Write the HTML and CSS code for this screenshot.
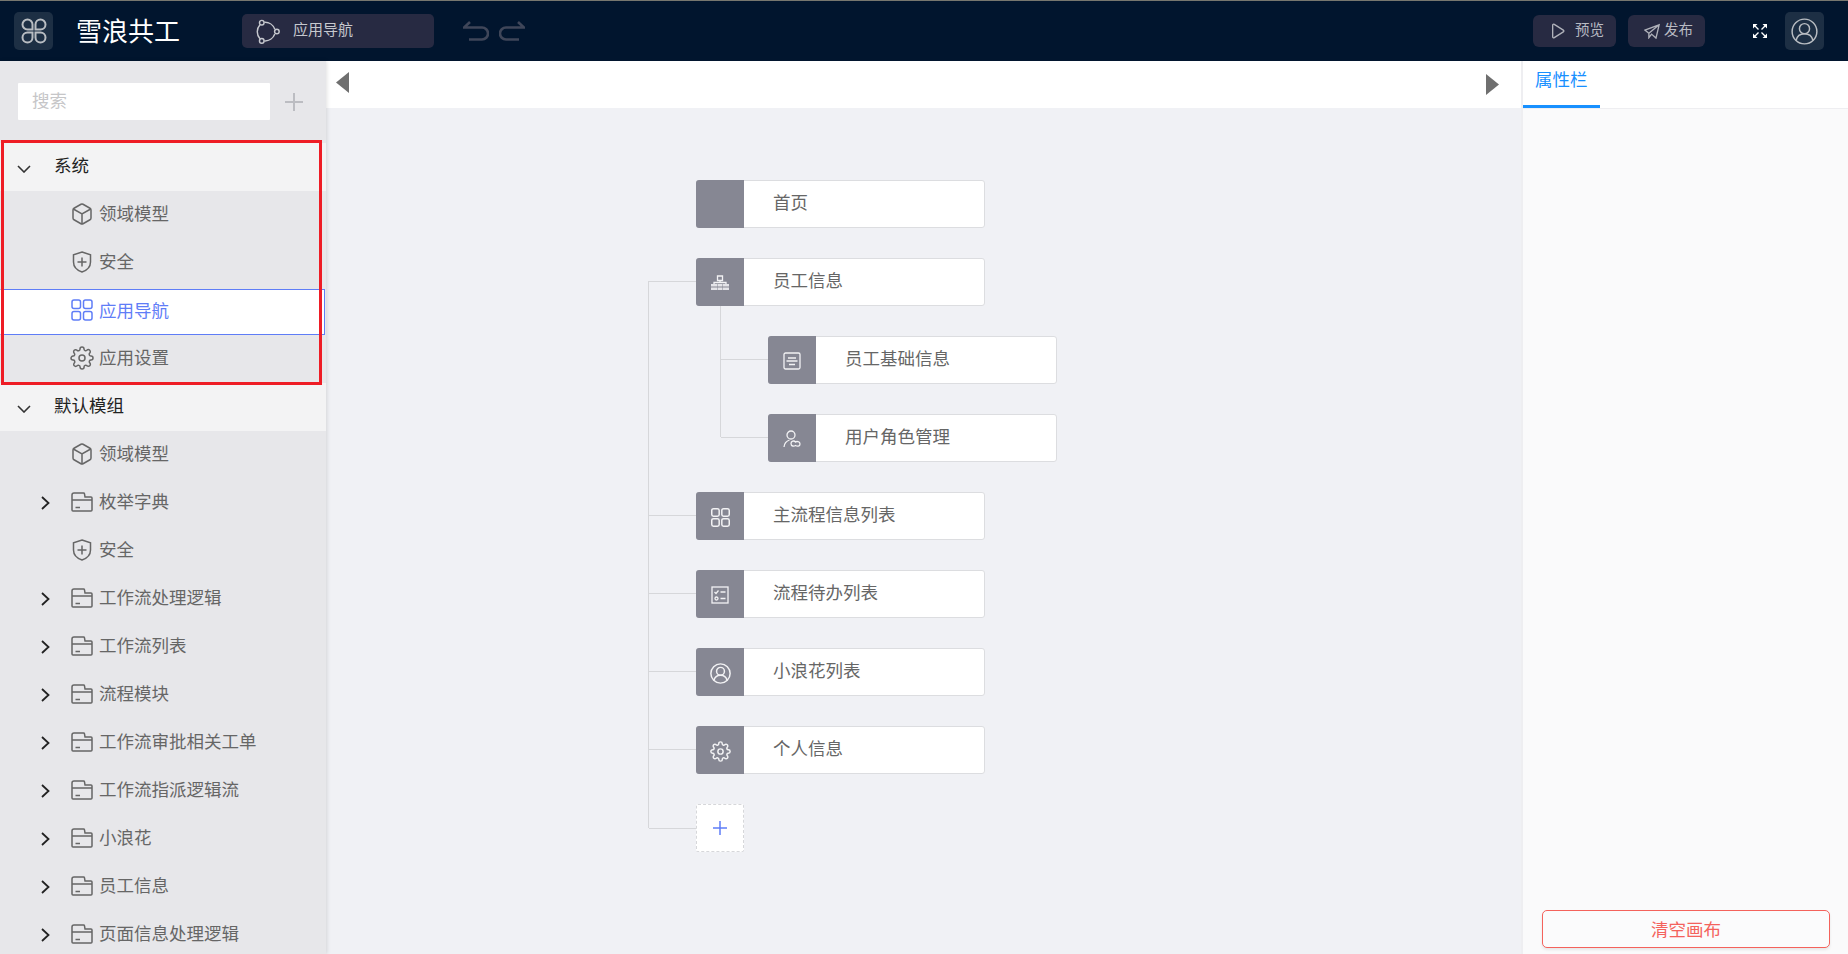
FILE: index.html
```html
<!DOCTYPE html>
<html lang="zh-CN">
<head>
<meta charset="utf-8">
<title>雪浪共工</title>
<link rel="stylesheet" href="styles.css">
</head>
<body>
<svg class="defs" width="0" height="0" aria-hidden="true">
  <defs>
    <symbol id="i-cube" viewBox="0 0 24 24"><path d="M21 16V8a2 2 0 0 0-1-1.73l-7-4a2 2 0 0 0-2 0l-7 4A2 2 0 0 0 3 8v8a2 2 0 0 0 1 1.73l7 4a2 2 0 0 0 2 0l7-4A2 2 0 0 0 21 16z"/><path d="M3.3 7 12 12l8.7-5M12 22V12"/></symbol>
    <symbol id="i-shield" viewBox="0 0 24 24"><path d="M12 2l8.5 2.8V12c0 4.800-3.500 8.300-8.500 10-5-1.700-8.500-5.200-8.500-10V4.800z"/><path d="M12 7.500v9M7.500 12h9"/></symbol>
    <symbol id="i-grid" viewBox="0 0 24 24"><rect x="2" y="2" width="8.500" height="8.500" rx="2"/><rect x="13.500" y="2" width="8.500" height="8.500" rx="2"/><rect x="2" y="13.500" width="8.500" height="8.500" rx="2"/><rect x="13.500" y="13.500" width="8.500" height="8.500" rx="2"/></symbol>
    <symbol id="i-gear" viewBox="0 0 24 24"><circle cx="12" cy="12" r="3"/><path d="M19.400 15a1.650 1.650 0 0 0 .33 1.820l.06.06a2 2 0 0 1 0 2.830 2 2 0 0 1-2.830 0l-.06-.06a1.650 1.650 0 0 0-1.820-.33 1.650 1.650 0 0 0-1 1.510V21a2 2 0 0 1-2 2 2 2 0 0 1-2-2v-.09A1.650 1.650 0 0 0 9 19.400a1.650 1.650 0 0 0-1.820.33l-.06.06a2 2 0 0 1-2.830 0 2 2 0 0 1 0-2.830l.06-.06a1.650 1.650 0 0 0 .33-1.820 1.650 1.650 0 0 0-1.510-1H3a2 2 0 0 1-2-2 2 2 0 0 1 2-2h.09A1.650 1.650 0 0 0 4.600 9a1.650 1.650 0 0 0-.33-1.820l-.06-.06a2 2 0 0 1 0-2.830 2 2 0 0 1 2.830 0l.06.06a1.650 1.650 0 0 0 1.820.33H9a1.650 1.650 0 0 0 1-1.510V3a2 2 0 0 1 2-2 2 2 0 0 1 2 2v.09a1.650 1.650 0 0 0 1 1.510 1.650 1.650 0 0 0 1.820-.33l.06-.06a2 2 0 0 1 2.830 0 2 2 0 0 1 0 2.830l-.06.06a1.650 1.650 0 0 0-.33 1.820V9a1.650 1.650 0 0 0 1.510 1H21a2 2 0 0 1 2 2 2 2 0 0 1-2 2h-.09a1.650 1.650 0 0 0-1.510 1z"/></symbol>
    <symbol id="i-folder" viewBox="0 0 24 24"><path d="M2 5a2 2 0 0 1 2-2h9.500a1 1 0 0 1 1 .8L15 7h6a1 1 0 0 1 1 1v12a1 1 0 0 1-1 1H3a1 1 0 0 1-1-1z"/><path d="M2 10h20M5.500 17.500h4.500"/></symbol>
    <symbol id="i-down" viewBox="0 0 14 8"><path d="M1 1l6 6 6-6"/></symbol>
    <symbol id="i-right" viewBox="0 0 9 14"><path d="M1 1l6.500 6L1 13"/></symbol>
    <symbol id="i-user" viewBox="0 0 24 24"><circle cx="12" cy="12" r="11"/><circle cx="12" cy="9.500" r="4.500"/><path d="M4.500 20c.8-3.700 3.800-6 7.500-6s6.700 2.300 7.500 6"/></symbol>
  </defs>
</svg>

<header class="topbar">
  <div class="icon-tile">
    <svg class="logo" viewBox="0 0 26 26"><path d="M11.500 11.500H6.500a5 5 0 1 1 5-5zM14.500 11.500V6.500a5 5 0 1 1 5 5zM11.500 14.500V19.500a5 5 0 1 1-5-5zM14.500 14.500H19.500a5 5 0 1 1-5 5z"/></svg>
  </div>
  <div class="brand">雪浪共工</div>
  <div class="nav-select">
    <svg class="nav-icon" viewBox="0 0 24 24"><circle cx="6.500" cy="3.500" r="2.200"/><circle cx="21" cy="12" r="2.200"/><circle cx="6.500" cy="21" r="2.200"/><path d="M9 3.200A10 10 0 0 1 19 9.800M19 14.500A10 10 0 0 1 9 21M4.800 19A10 10 0 0 1 4.800 5.500"/></svg>
    <span>应用导航</span>
  </div>
  <div class="history">
    <svg class="hist-icon" viewBox="0 0 26 20"><path d="M7 1L1 6.500h18a5.500 5.500 0 0 1 0 12H6"/></svg>
    <svg class="hist-icon" viewBox="0 0 26 20"><path d="M19 1l6 5.500H7a5.500 5.500 0 0 0 0 12h13"/></svg>
  </div>
  <div class="top-actions">
    <button class="top-btn preview"><svg class="btn-icon" viewBox="0 0 16 18"><path d="M2 2.500c0-1 1-1.500 1.800-1L14 8c.8.500.8 1.500 0 2L3.800 16.500c-.8.500-1.800 0-1.800-1z"/></svg><span>预览</span></button>
    <button class="top-btn publish"><svg class="btn-icon" viewBox="0 0 18 18"><path d="M1 8l16-6-3.500 15-5-4.500L5.500 16.500V11.500zM17 2L5.500 11.500"/></svg><span>发布</span></button>
    <svg class="full-icon" viewBox="0 0 16 16"><path d="M1 1h4.500L1 5.500zM15 1v4.500L10.500 1zM1 15v-4.500L5.500 15zM15 15h-4.500L15 10.500z"/><path class="full-line" d="M3 3l3.500 3.500M13 3L9.500 6.500M3 13l3.500-3.500M13 13L9.500 9.500"/></svg>
    <div class="icon-tile"><svg class="avatar"><use href="#i-user"/></svg></div>
  </div>
</header>

<main class="workspace">
  <aside class="sidebar">
    <div class="search-row">
      <div class="search-box">搜索</div>
      <svg class="add-icon" viewBox="0 0 18 18"><path d="M9 0v18M0 9h18"/></svg>
    </div>
    <div class="tree">
      <div class="highlight"></div>
      <div class="row head"><svg class="chev-down"><use href="#i-down"/></svg><span>系统</span></div>
      <div class="row"><svg class="ico"><use href="#i-cube"/></svg><span>领域模型</span></div>
      <div class="row"><svg class="ico"><use href="#i-shield"/></svg><span>安全</span></div>
      <div class="row selected"><svg class="ico"><use href="#i-grid"/></svg><span>应用导航</span></div>
      <div class="row"><svg class="ico"><use href="#i-gear"/></svg><span>应用设置</span></div>
      <div class="row head"><svg class="chev-down"><use href="#i-down"/></svg><span>默认模组</span></div>
      <div class="row"><svg class="ico"><use href="#i-cube"/></svg><span>领域模型</span></div>
      <div class="row"><svg class="chev-right"><use href="#i-right"/></svg><svg class="ico"><use href="#i-folder"/></svg><span>枚举字典</span></div>
      <div class="row"><svg class="ico"><use href="#i-shield"/></svg><span>安全</span></div>
      <div class="row"><svg class="chev-right"><use href="#i-right"/></svg><svg class="ico"><use href="#i-folder"/></svg><span>工作流处理逻辑</span></div>
      <div class="row"><svg class="chev-right"><use href="#i-right"/></svg><svg class="ico"><use href="#i-folder"/></svg><span>工作流列表</span></div>
      <div class="row"><svg class="chev-right"><use href="#i-right"/></svg><svg class="ico"><use href="#i-folder"/></svg><span>流程模块</span></div>
      <div class="row"><svg class="chev-right"><use href="#i-right"/></svg><svg class="ico"><use href="#i-folder"/></svg><span>工作流审批相关工单</span></div>
      <div class="row"><svg class="chev-right"><use href="#i-right"/></svg><svg class="ico"><use href="#i-folder"/></svg><span>工作流指派逻辑流</span></div>
      <div class="row"><svg class="chev-right"><use href="#i-right"/></svg><svg class="ico"><use href="#i-folder"/></svg><span>小浪花</span></div>
      <div class="row"><svg class="chev-right"><use href="#i-right"/></svg><svg class="ico"><use href="#i-folder"/></svg><span>员工信息</span></div>
      <div class="row"><svg class="chev-right"><use href="#i-right"/></svg><svg class="ico"><use href="#i-folder"/></svg><span>页面信息处理逻辑</span></div>
    </div>
  </aside>

  <section class="canvas">
    <div class="canvas-bar">
      <svg class="tri" viewBox="0 0 13 21"><path d="M13 0v21L0 10.500z"/></svg>
      <svg class="tri tri-right" viewBox="0 0 13 21"><path d="M0 0v21l13-10.500z"/></svg>
    </div>
    <div class="flow">
      <div class="card"><div class="card-icon"></div><div class="card-text">首页</div></div>
      <div class="card linked parent">
        <div class="card-icon">
          <svg class="card-svg solid" viewBox="0 0 18 16"><path class="hollow" d="M6.500 1h5v4.500h-5z"/><path class="hollow" d="M9 5.500v2M3 9.500V7.500h12v2"/><path d="M0 9h6v2.500H0zM6.500 9h5v2.500h-5zM12 9h6v2.500h-6zM0 12.500h6V15H0zM6.500 12.500h5V15h-5zM12 12.500h6V15h-6z"/></svg>
        </div>
        <div class="card-text">员工信息</div>
      </div>
      <div class="children">
        <div class="card child">
          <div class="card-icon"><svg class="card-svg" viewBox="0 0 18 18"><rect x="1" y="1" width="16" height="16" rx="1.500"/><path d="M5 6h8M3.500 9h11M6 12.500h6"/></svg></div>
          <div class="card-text">员工基础信息</div>
        </div>
        <div class="card child">
          <div class="card-icon"><svg class="card-svg" viewBox="0 0 18 18"><circle cx="8" cy="5" r="4"/><path d="M1 17c.3-3.500 2.500-6 5.500-7M8 13.500a2.500 2.500 0 0 1 4.500-1.500c1-.8 4.500-.8 4.500 2s-3 2.500-4.500 1.500c-1.500 1-4.500 1-4.500-2z"/></svg></div>
          <div class="card-text">用户角色管理</div>
        </div>
      </div>
      <div class="card linked">
        <div class="card-icon"><svg class="card-svg wide"><use href="#i-grid"/></svg></div>
        <div class="card-text">主流程信息列表</div>
      </div>
      <div class="card linked">
        <div class="card-icon"><svg class="card-svg" viewBox="0 0 18 18"><rect x="1" y="1" width="16" height="16"/><path d="M3.500 6l1.500 1.500L7.500 4.500M9.500 6h5M9.500 12.500h5"/><circle cx="5.500" cy="12.500" r="1.500"/></svg></div>
        <div class="card-text">流程待办列表</div>
      </div>
      <div class="card linked">
        <div class="card-icon"><svg class="card-svg wide"><use href="#i-user"/></svg></div>
        <div class="card-text">小浪花列表</div>
      </div>
      <div class="card linked">
        <div class="card-icon"><svg class="card-svg wide"><use href="#i-gear"/></svg></div>
        <div class="card-text">个人信息</div>
      </div>
      <div class="add-node linked"><svg class="add-node-icon" viewBox="0 0 14 14"><path d="M7 0v14M0 7h14"/></svg></div>
    </div>
  </section>

  <aside class="props">
    <div class="tabs"><div class="tab">属性栏</div></div>
    <div class="props-body"></div>
    <button class="clear-btn">清空画布</button>
  </aside>
</main>
</body>
</html>
```

FILE: styles.css
```css
* { box-sizing: border-box; }

html, body {
  margin: 0;
  height: 100%;
  overflow: hidden;
}

body {
  display: flex;
  flex-direction: column;
  font-family: "Noto Sans CJK SC", "Noto Sans", sans-serif;
  background: #f0f1f5;
  color: #666;
}

.defs { position: absolute; }

svg { fill: none; stroke: currentColor; flex: none; display: block; }

/* top bar */
.topbar {
  height: 61px;
  flex: none;
  display: flex;
  align-items: center;
  background: #01152e;
  border-top: 1px solid #77776f;
  padding: 0 24px 0 14px;
}

.icon-tile {
  width: 39px;
  height: 38px;
  border-radius: 5px;
  background: #1d2f44;
  display: flex;
  align-items: center;
  justify-content: center;
}

.logo { width: 26px; height: 26px; color: #b9bdc2; stroke-width: 2; }

.brand {
  margin: -2px 0 0 23px;
  width: 166px;
  font-size: 26px;
  line-height: 36px;
  color: #fff;
}

.nav-select {
  width: 192px;
  height: 34px;
  border-radius: 5px;
  background: #272a42;
  display: flex;
  align-items: center;
  padding-left: 13px;
  color: #c6c8ce;
  font-size: 15px;
}

.nav-select span { line-height: 22px; margin-top: -4px; }

.nav-icon { width: 25px; height: 25px; margin-right: 13px; stroke-width: 1.4; color: #c6c8ce; }

.history { display: flex; gap: 10px; margin-left: 29px; }

.hist-icon { width: 26px; height: 20px; color: #3f4659; stroke-width: 2.6; }

.top-actions {
  margin-left: auto;
  display: flex;
  align-items: center;
}

.top-btn {
  height: 32px;
  border: 0;
  border-radius: 6px;
  background: #272a42;
  color: #b8bac2;
  font: inherit;
  font-size: 14.500px;
  display: flex;
  align-items: center;
  padding: 0;
}

.top-btn span { line-height: 20px; margin-top: -4px; }

.preview { width: 83px; padding-left: 17px; gap: 9px; }

.publish { width: 77px; padding-left: 16px; gap: 4px; margin-left: 12px; }

.btn-icon { width: 16px; height: 16px; stroke-width: 1.5; color: #b0b2ba; }

.full-icon { width: 16px; height: 16px; margin: 0 17px 0 47px; color: #fff; fill: #fff; stroke: none; }

.full-line { stroke: #fff; stroke-width: 1.400; }

.avatar { width: 27px; height: 27px; stroke-width: 1.300; color: #b9bdc2; }

/* layout */
.workspace {
  flex: 1;
  min-height: 0;
  display: flex;
}

/* sidebar */
.sidebar {
  width: 326px;
  flex: none;
  background: #e7e7ea;
  box-shadow: 1px 0 4px rgba(0, 0, 0, .12);
  overflow: visible;
  position: relative;
  z-index: 2;
  display: flex;
  flex-direction: column;
}

.search-row {
  display: flex;
  align-items: center;
  padding: 22px 0 23px 18px;
}

.search-box {
  width: 252px;
  height: 37px;
  background: #fff;
  border-radius: 1px;
  padding-left: 14px;
  font-size: 17.500px;
  line-height: 33px;
  color: #c6c6c8;
}

.add-icon { width: 18px; height: 18px; margin-left: 15px; color: #bcbdc2; stroke-width: 2; }

.tree { position: relative; }

.row {
  height: 48px;
  display: flex;
  align-items: center;
  padding-left: 99px;
  font-size: 17.500px;
  color: #666;
  position: relative;
}

.row span { line-height: 24px; margin-top: -4px; }

.row.head {
  background: #f3f3f4;
  color: #222;
  padding-left: 54px;
}

.row.selected {
  height: 46px;
  margin: 2px 1px 0 0;
  background: #fff;
  color: #5f7df7;
  border: 1px solid #5f7df7;
  border-left-color: #fff;
  padding-left: 98px;
  z-index: 1;
}

.row.selected .ico { left: 69px; top: 8px; }

.ico {
  position: absolute;
  left: 70px;
  top: 11px;
  width: 24px;
  height: 24px;
  stroke-width: 1.500;
}

.chev-down {
  position: absolute;
  left: 17px;
  top: 22px;
  width: 14px;
  height: 8px;
  color: #333;
  stroke-width: 1.600;
}

.chev-right {
  position: absolute;
  left: 41px;
  top: 17px;
  width: 9px;
  height: 14px;
  color: #222;
  stroke-width: 1.800;
}

.highlight {
  position: absolute;
  left: 1px;
  top: -3px;
  width: 321px;
  height: 245px;
  border: 3px solid #ee1c25;
  z-index: 3;
  pointer-events: none;
}

/* canvas */
.canvas {
  flex: 1;
  min-width: 0;
  display: flex;
  flex-direction: column;
  background: #f0f1f5;
}

.canvas-bar {
  height: 47px;
  flex: none;
  background: #fff;
  display: flex;
  justify-content: space-between;
  padding: 11px 22px 0 10px;
}

.tri { width: 13px; height: 21px; fill: #6f6f6f; stroke: none; }

.tri-right { margin-top: 2px; }

.flow {
  position: relative;
  margin: 72px 0 0 370px;
  display: flex;
  flex-direction: column;
  gap: 30px;
}

.flow::before {
  content: "";
  position: absolute;
  left: -48px;
  top: 101px;
  height: 547px;
  border-left: 1px solid #d6d7da;
}

.card {
  width: 289px;
  height: 48px;
  display: flex;
  background: #fff;
  border: 1px solid #dcdde0;
  border-radius: 3px;
  position: relative;
}

.card-icon {
  width: 48px;
  flex: none;
  margin: -1px 0 -1px -1px;
  background: #868793;
  border-radius: 3px 0 0 3px;
  display: flex;
  align-items: center;
  justify-content: center;
  color: #f2f2f4;
}

.card-svg { width: 18px; height: 18px; stroke-width: 1.300; margin-top: 2px; }

.card-svg.wide { width: 21px; height: 21px; stroke-width: 1.700; }

.card-svg.solid { fill: #e4e4e8; stroke: none; }

.card-svg .hollow { fill: none; stroke: #f2f2f4; stroke-width: 1.300; }

.card-text {
  padding-left: 29px;
  font-size: 17.500px;
  line-height: 42px;
  color: #666;
}

.linked::before {
  content: "";
  position: absolute;
  left: -48px;
  top: 22px;
  width: 47px;
  border-top: 1px solid #d6d7da;
}

.parent::after {
  content: "";
  position: absolute;
  left: 23px;
  top: 47px;
  height: 131px;
  border-left: 1px solid #d6d7da;
}

.children {
  display: flex;
  flex-direction: column;
  gap: 30px;
  padding-left: 72px;
}

.child::before {
  content: "";
  position: absolute;
  left: -48px;
  top: 22px;
  width: 47px;
  border-top: 1px solid #d6d7da;
}

.add-node {
  position: relative;
  width: 48px;
  height: 48px;
  background: #fff;
  border: 1px dashed #d6d7da;
  border-radius: 2px;
  display: flex;
  align-items: center;
  justify-content: center;
}

.add-node.linked::before { top: 23px; }

.add-node-icon { width: 14px; height: 14px; color: #5f7df7; stroke-width: 1.500; }

/* properties */
.props {
  width: 327px;
  flex: none;
  display: flex;
  flex-direction: column;
  background: #fafafb;
  border-left: 2px solid #eeeef1;
}

.tabs {
  height: 48px;
  flex: none;
  background: #fff;
  border-bottom: 1px solid #eeeef1;
}

.tab {
  width: 77px;
  height: 47px;
  padding-left: 12px;
  border-bottom: 3px solid #1890ff;
  color: #1890ff;
  font-size: 17.500px;
  line-height: 36px;
}

.props-body { flex: 1; }

.clear-btn {
  flex: none;
  height: 38px;
  margin: 0 18px 6px 19px;
  border: 1px solid #f4625c;
  border-radius: 5px;
  background: #fbfbfc;
  color: #f4625c;
  font: inherit;
  font-size: 17.500px;
  line-height: 34px;
  padding: 0;
  box-shadow: 0 2px 3px rgba(0, 0, 0, .08);
}
```
